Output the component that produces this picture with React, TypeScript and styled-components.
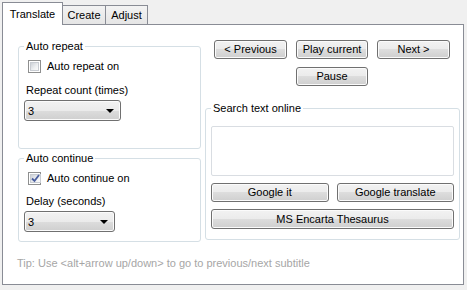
import React from 'react';
import styled, { createGlobalStyle } from 'styled-components';

const Global = createGlobalStyle`
  html, body { margin: 0; padding: 0; background: #f0f0f0; }
  body {
    font-family: "Liberation Sans", Arial, sans-serif;
    font-size: 11px;
    color: #000;
  }
  * { box-sizing: border-box; }
`;

const Window = styled.div`
  width: 467px;
  height: 290px;
  padding: 2px 3px 5px 2px;
  display: flex;
  flex-direction: column;
`;

const TabStrip = styled.div`
  height: 22px;
  display: flex;
  align-items: flex-end;
`;

const Tab = styled.div<{ $active?: boolean; $w: number }>`
  position: relative;
  width: ${p => p.$w}px;
  height: ${p => (p.$active ? 23 : 19)}px;
  margin-bottom: ${p => (p.$active ? -1 : 0)}px;
  margin-left: ${p => (p.$active ? 0 : -1)}px;
  z-index: ${p => (p.$active ? 2 : 1)};
  border: 1px solid #898c95;
  border-bottom: none;
  background: ${p => (p.$active ? '#fff' : 'linear-gradient(#f3f3f3, #e5e5e5)')};
  display: flex;
  align-items: ${p => (p.$active ? 'flex-start' : 'center')};
  justify-content: center;
  padding-top: ${p => (p.$active ? 5 : 0)}px;
  line-height: 13px;
  &:first-child { margin-left: 0; }
`;

const Panel = styled.div`
  flex: 1;
  border: 1px solid #898c95;
  background: #fff;
  display: flex;
  flex-direction: column;
  padding: 15px 0 0 15px;
`;

const Columns = styled.div`
  display: grid;
  grid-template-columns: 183px 255px;
  column-gap: 4px;
  align-items: start;
`;

const LeftCol = styled.div`
  display: flex;
  flex-direction: column;
  gap: 3px;
`;

const Group = styled.fieldset<{ $h: number }>`
  margin: 0;
  height: ${p => p.$h}px;
  border: 1px solid #d5dfe5;
  border-radius: 3px;
  padding: 0 5px 0 5px;
  min-width: 0;
`;

const Legend = styled.legend`
  padding: 0 2px;
  margin-left: 0px;
  line-height: 13px;
  font-size: 11px;
`;

const CheckRow = styled.label`
  display: flex;
  align-items: center;
  height: 13px;
  margin: 7px 0 0 4px;
  gap: 6px;
  line-height: 13px;
`;

const Box = styled.span`
  width: 13px;
  height: 13px;
  border: 1px solid #8e8f8f;
  background: #fff;
  padding: 1px;
  display: flex;
  flex: none;
`;

const BoxInner = styled.span`
  flex: 1;
  border: 1px solid #c8ccd2;
  background: linear-gradient(135deg, #cdd1d7 0%, #eef0f2 60%, #fafafa 100%);
  position: relative;
  display: flex;
  align-items: center;
  justify-content: center;
`;

const FieldLabel = styled.div<{ $mt: number }>`
  margin: ${p => p.$mt}px 0 0 2px;
  line-height: 13px;
`;

const Select = styled.div<{ $w: number; $mt: number }>`
  width: ${p => p.$w}px;
  height: 21px;
  margin-top: ${p => p.$mt}px;
  border: 1px solid #707070;
  border-radius: 3px;
  background: linear-gradient(#f2f2f2 0%, #ebebeb 50%, #dddddd 50%, #cfcfcf 100%);
  box-shadow: inset 0 0 0 1px #fbfbfb;
  display: flex;
  align-items: center;
  justify-content: space-between;
  padding: 0 6px 0 3px;
`;

const Arrow = styled.span`
  width: 0;
  height: 0;
  border-left: 4px solid transparent;
  border-right: 4px solid transparent;
  border-top: 4px solid #000;
  margin-top: 1px;
`;

const RightCol = styled.div`
  display: flex;
  flex-direction: column;
  align-items: stretch;
`;

const ButtonRow = styled.div<{ $mt?: number }>`
  display: flex;
  justify-content: center;
  gap: 9px;
  margin-top: ${p => p.$mt ?? 0}px;
  padding-right: 1px;
`;

const Button = styled.button<{ $w?: number; $h?: number }>`
  width: ${p => (p.$w ? `${p.$w}px` : 'auto')};
  height: ${p => p.$h ?? 19}px;
  border: 1px solid #707070;
  border-radius: 3px;
  background: linear-gradient(#f2f2f2 0%, #ebebeb 50%, #dddddd 50%, #cfcfcf 100%);
  box-shadow: inset 0 0 0 1px #fbfbfb;
  font-family: "Liberation Sans", Arial, sans-serif;
  font-size: 11px;
  color: #000;
  padding: 0;
  line-height: 13px;
`;

const SearchGroup = styled.fieldset`
  margin: 16px 0 0 0;
  height: 138px;
  border: 1px solid #d5dfe5;
  border-radius: 3px;
  padding: 0 5px 0 5px;
  min-width: 0;
  display: flex;
  flex-direction: column;
`;

const TextArea = styled.div`
  margin-top: 11px;
  height: 50px;
  border: 1px solid #d9dde2;
  border-radius: 2px;
  background: #fff;
`;

const SearchButtons = styled.div`
  margin-top: 7px;
  display: grid;
  grid-template-columns: 1fr 1fr;
  gap: 7px 8px;
`;

const Wide = styled(Button)`
  grid-column: 1 / span 2;
`;

const Tip = styled.div`
  margin: 15px 0 0 -1px;
  line-height: 13px;
  color: #a6a6a6;
`;

const Check = () => (
  <svg width="9" height="9" viewBox="0 0 9 9">
    <path d="M1 4.5 L3.5 7 L8 1" fill="none" stroke="#4a5e9e" strokeWidth="1.8" />
  </svg>
);

export default function App() {
  return (
    <>
      <Global />
      <Window>
        <TabStrip>
          <Tab $active $w={61}>Translate</Tab>
          <Tab $w={44}>Create</Tab>
          <Tab $w={43}>Adjust</Tab>
        </TabStrip>
        <Panel>
          <Columns>
            <LeftCol>
              <Group $h={109}>
                <Legend>Auto repeat</Legend>
                <CheckRow>
                  <Box><BoxInner /></Box>
                  Auto repeat on
                </CheckRow>
                <FieldLabel $mt={11}>Repeat count (times)</FieldLabel>
                <Select $w={97} $mt={3}>
                  <span>3</span>
                  <Arrow />
                </Select>
              </Group>
              <Group $h={90}>
                <Legend>Auto continue</Legend>
                <CheckRow>
                  <Box><BoxInner><Check /></BoxInner></Box>
                  Auto continue on
                </CheckRow>
                <FieldLabel $mt={10}>Delay (seconds)</FieldLabel>
                <Select $w={91} $mt={3}>
                  <span>3</span>
                  <Arrow />
                </Select>
              </Group>
            </LeftCol>
            <RightCol>
              <ButtonRow>
                <Button $w={73}>&lt; Previous</Button>
                <Button $w={72}>Play current</Button>
                <Button $w={73}>Next &gt;</Button>
              </ButtonRow>
              <ButtonRow $mt={8}>
                <Button $w={72}>Pause</Button>
              </ButtonRow>
              <SearchGroup>
                <Legend>Search text online</Legend>
                <TextArea />
                <SearchButtons>
                  <Button>Google it</Button>
                  <Button>Google translate</Button>
                  <Wide $h={20}>MS Encarta Thesaurus</Wide>
                </SearchButtons>
              </SearchGroup>
            </RightCol>
          </Columns>
          <Tip>Tip: Use &lt;alt+arrow up/down&gt; to go to previous/next subtitle</Tip>
        </Panel>
      </Window>
    </>
  );
}
